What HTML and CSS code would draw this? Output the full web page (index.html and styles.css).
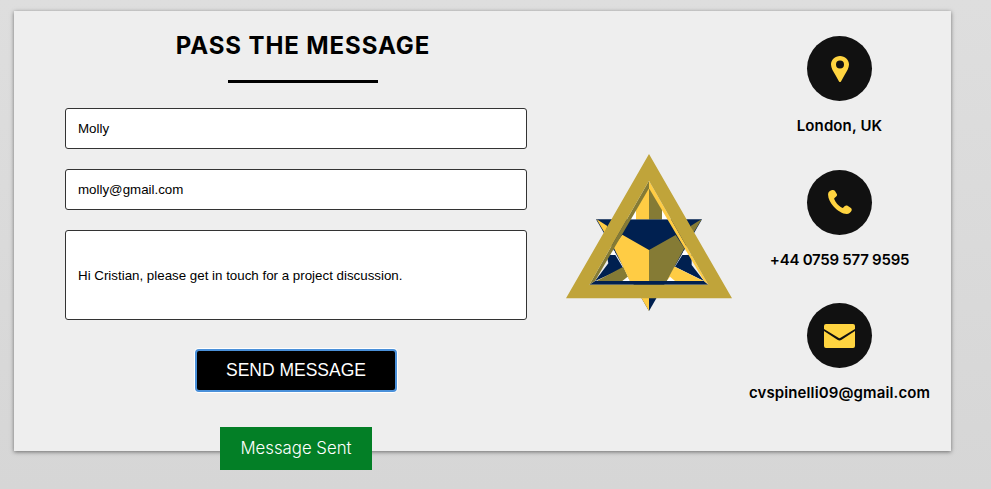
FILE: index.html
```html
<!DOCTYPE html>
<html lang="en">
<head>
  <meta charset="UTF-8">
  <meta name="viewport" content="width=device-width, initial-scale=1">
  <title>Pass the message</title>
  <link rel="stylesheet" href="styles.css">
</head>
<body>
  <div class="card">
    <form class="contact-form">
      <div class="form-title">
        <h2>PASS THE MESSAGE</h2>
        <div class="title-line"></div>
      </div>
      <input class="field" type="text" value="Molly">
      <input class="field" type="email" value="molly@gmail.com">
      <textarea class="field message">Hi Cristian, please get in touch for a project discussion.</textarea>
      <button class="send" type="button">SEND MESSAGE</button>
      <div class="sent">Message Sent</div>
    </form>

    <div class="logo">
      <svg viewBox="48 42 498 474" width="166" height="158">
        <!-- back star -->
        <polygon fill="#002050" points="138,238 456,238 297,513" />
        <polygon fill="#ffcc44" points="140,238 166,282 172,258 152,245" />
        <polygon fill="#857b35" points="455,238 428,282 422,258 442,245" />
        <polygon fill="#ffcc44" points="272,470 297,470 297,513" />
        <polygon fill="#ffffff" points="240,238 258,205 258,238" />
        <polygon fill="#ffffff" points="354,238 336,205 336,238" />
        <polygon fill="#ffcc44" points="297,140 258,205 258,238 297,238" />
        <polygon fill="#857b35" points="297,140 336,205 336,238 297,238" />
        <!-- lower corners -->
        <polygon fill="#ffffff" points="170,340 193,332 198,347" />
        <polygon fill="#ffffff" points="424,340 401,332 396,347" />
        <polygon fill="#002050" points="170,345 196,345 220,385 135,423 175,370" />
        <polygon fill="#002050" points="425,345 397,345 375,380 462,423 425,375" />
        <polygon fill="#857b35" points="140,423 220,380 240,423" />
        <polygon fill="#ffcc44" points="460,423 370,378 350,423" />
        <polygon fill="#ffffff" points="217,423 240,423 233,410" />
        <polygon fill="#ffffff" points="350,423 375,423 360,410" />
        <!-- middle block -->
        <polygon fill="#ffcc44" points="217,284 297,330 297,423 240,423 190,320" />
        <polygon fill="#857b35" points="377,285 297,330 297,423 350,423 403,325" />
        <!-- inner base and bevel -->
        <polygon fill="#002050" points="118,434 475,434 462,423 135,423" />
        <polygon fill="#857b35" points="297,122 118,434 135,423 297,145" />
        <polygon fill="#ffcc44" points="297,122 475,434 462,423 297,145" />
        <path fill="#c0a43a" fill-rule="evenodd" d="M297 42 L546 475 L48 475 Z M297 122 L118 434 L475 434 Z" />
      </svg>
    </div>

    <div class="contact-info">
      <div class="info-item">
        <div class="icon-circle">
          <svg viewBox="0 0 18 26" width="18" height="26">
            <path fill="#ffd440" fill-rule="evenodd" d="M9 0 C4 0 0 3.8 0 8.6 C0 12 2.2 15.5 4.4 19 L8 25.4 Q9 26.4 10 25.4 L13.6 19 C15.8 15.5 18 12 18 8.6 C18 3.8 14 0 9 0 Z M9 4.6 A4 4 0 1 1 9 12.6 A4 4 0 1 1 9 4.6 Z" />
          </svg>
        </div>
        <p>London, UK</p>
      </div>
      <div class="info-item">
        <div class="icon-circle">
          <svg viewBox="0 0 24 24" width="24" height="24">
            <path fill="#ffd440" d="M3.4 0.3 C2 0.8 0.2 2 0.1 4 C-0.2 8 2.3 12.6 5.6 16.4 C9.4 20.6 14.6 23.8 18.6 23.9 C20.8 24 22.6 22.6 23.4 21 C24 19.8 23.8 18.8 22.9 18.1 L19.6 15.8 C18.6 15.2 17.6 15.3 16.8 16.1 L15.4 17.5 C14.8 18 14.2 18 13.6 17.6 C11.9 16.6 10.2 15.2 9 13.8 C7.8 12.4 6.9 10.8 6.3 9.3 C6 8.6 6.2 8.1 6.8 7.7 L8.2 6.6 C9.1 5.8 9.3 4.9 8.8 3.9 L7 0.9 C6.2 -0.1 4.8 -0.2 3.4 0.3 Z" />
          </svg>
        </div>
        <p class="phone">+44 0759 577 9595</p>
      </div>
      <div class="info-item">
        <div class="icon-circle">
          <svg viewBox="0 0 31 24" width="31" height="24">
            <path fill="#ffd440" d="M2 0 H29 A2 2 0 0 1 31 2 V5 L16.6 13.8 Q15.5 14.5 14.4 13.8 L0 5 V2 A2 2 0 0 1 2 0 Z" />
            <path fill="#ffd440" d="M0 7 L13.4 15.8 Q15.5 17 17.6 15.8 L31 7 V22 A2 2 0 0 1 29 24 H2 A2 2 0 0 1 0 22 Z" />
          </svg>
        </div>
        <p>cvspinelli09@gmail.com</p>
      </div>
    </div>
  </div>
</body>
</html>
```

FILE: styles.css
```css
html, body {
  height: 100%;
}

body {
  box-sizing: border-box;
  margin: 0;
  padding: 11px 0 0 14px;
  background: linear-gradient(#dedede, #d6d6d6);
  font-family: 'Inter', sans-serif;
}

.card {
  display: grid;
  grid-template-columns: 462px 166px 215px;
  box-sizing: border-box;
  width: 937px;
  height: 440px;
  padding-left: 51px;
  background: #eeeeee;
  box-shadow: 0 1px 4px rgba(0, 0, 0, 0.5);
}

.contact-form {
  display: flex;
  flex-direction: column;
  align-items: center;
  padding-top: 20px;
}

.form-title {
  display: flex;
  flex-direction: column;
  align-items: center;
  padding-left: 14px;
}

h2 {
  margin: 0;
  font-size: 24px;
  line-height: 30px;
  font-weight: 700;
  letter-spacing: 0.9px;
  color: #000;
}

.title-line {
  width: 150px;
  height: 3px;
  margin: 19px 0 25px;
  background: #000;
}

.field {
  display: block;
  box-sizing: border-box;
  width: 100%;
  height: 41px;
  margin: 0 0 20px;
  padding: 0 12px;
  border: 1px solid #333;
  border-radius: 3px;
  background: #fff;
  font-family: 'Liberation Sans', Arial, sans-serif;
  font-size: 13.33px;
  color: #000;
}

.message {
  height: 90px;
  margin-bottom: 29px;
  padding-top: 37px;
  resize: none;
}

.send {
  width: 202px;
  height: 43px;
  border: 2px solid #4a90d9;
  border-radius: 4px;
  background: #000;
  box-shadow: 0 0 0 1px #fff;
  font-family: 'Liberation Sans', Arial, sans-serif;
  font-size: 17.5px;
  color: #fff;
}

.sent {
  flex: none;
  width: 152px;
  height: 43px;
  margin-top: 35px;
  background: #037f26;
  font-size: 16.8px;
  font-weight: 300;
  line-height: 43px;
  text-align: center;
  color: #fff;
}

.logo {
  margin-left: 39px;
  margin-top: 143px;
  width: 166px;
}

.logo svg {
  display: block;
}

.contact-info {
  display: flex;
  flex-direction: column;
  gap: 33.5px;
  padding-top: 25px;
  margin-left: 39px;
  margin-right: -39px;
}

.info-item {
  display: flex;
  flex-direction: column;
  align-items: center;
}

.icon-circle {
  display: flex;
  align-items: center;
  justify-content: center;
  width: 65px;
  height: 65px;
  border-radius: 50%;
  background: #111;
}

.info-item p {
  margin: 15px 0 0;
  font-size: 15px;
  line-height: 20px;
  font-weight: 600;
  letter-spacing: 0.12px;
  color: #000;
  white-space: nowrap;
}

.info-item .phone {
  letter-spacing: -0.25px;
}
```
